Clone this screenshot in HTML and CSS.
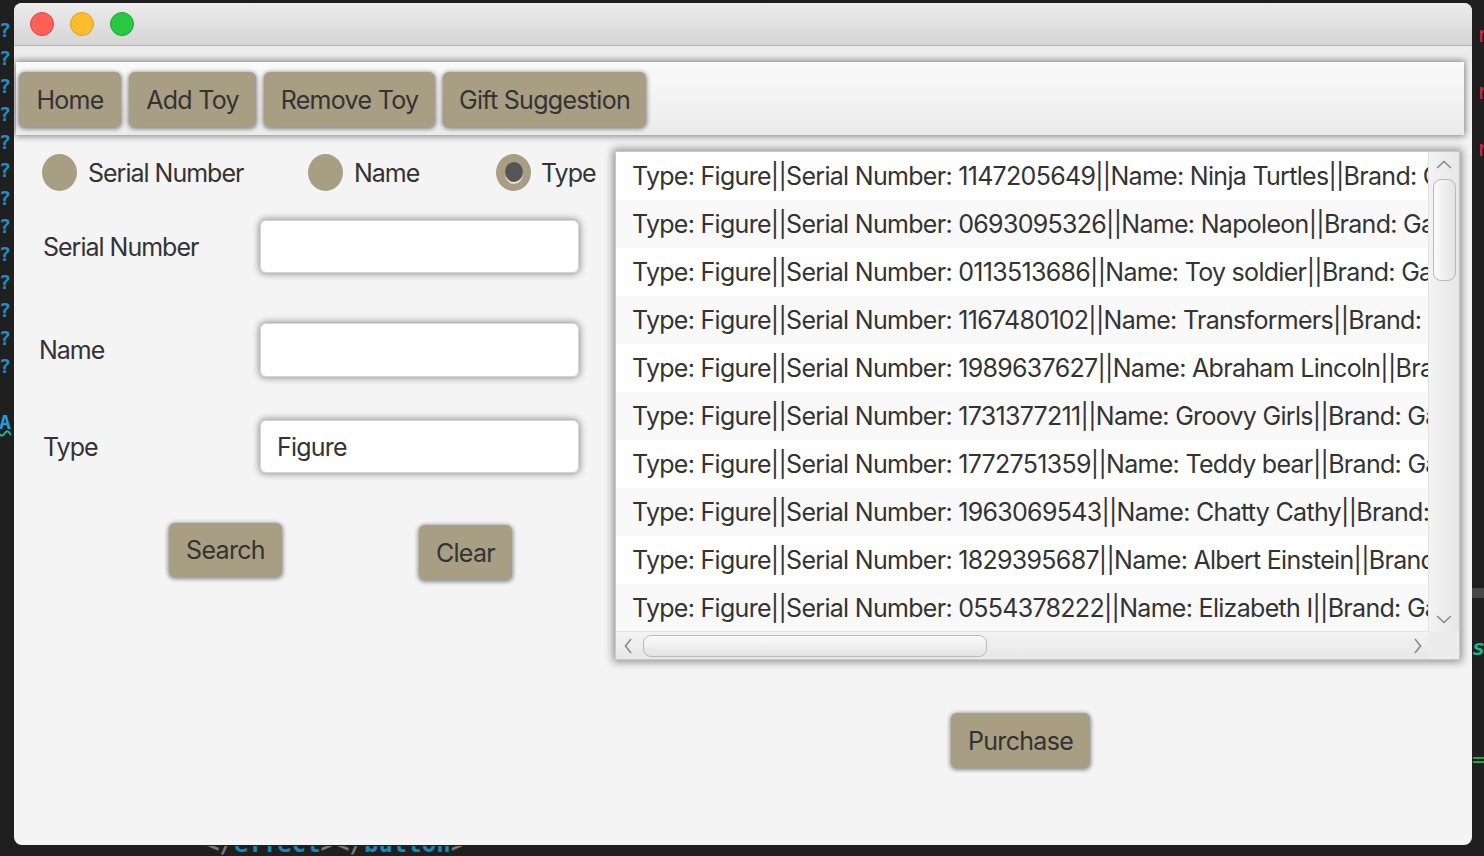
FILE: index.html
```html
<!DOCTYPE html>
<html lang="en">
<head>
<meta charset="utf-8">
<title>Toy Store</title>
<link rel="stylesheet" href="styles.css">
</head>
<body>
<div class="desk">
  <div class="gutter-left">
    <div class="q">?</div><div class="q">?</div><div class="q">?</div><div class="q">?</div><div class="q">?</div><div class="q">?</div><div class="q">?</div><div class="q">?</div><div class="q">?</div><div class="q">?</div><div class="q">?</div><div class="q">?</div><div class="q">?</div>
    <div class="a-mark">A</div>
  </div>
  <div class="window">
    <div class="titlebar">
      <span class="light red"></span>
      <span class="light yellow"></span>
      <span class="light green"></span>
    </div>
    <div class="strip"></div>
    <div class="toolbar">
      <button class="btn tb-home">Home</button>
      <button class="btn tb-add">Add Toy</button>
      <button class="btn tb-remove">Remove Toy</button>
      <button class="btn tb-gift">Gift Suggestion</button>
    </div>
    <div class="content">
      <div class="left">
        <div class="radios">
          <div class="radio r-serial"><span class="dot"></span><span>Serial Number</span></div>
          <div class="radio r-name"><span class="dot"></span><span>Name</span></div>
          <div class="radio r-type"><span class="dot on"><span class="pip"></span></span><span>Type</span></div>
        </div>
        <div class="frow frow-serial"><span class="flabel">Serial Number</span><div class="field"></div></div>
        <div class="frow frow-name"><span class="flabel flabel-name">Name</span><div class="field"></div></div>
        <div class="frow frow-type"><span class="flabel">Type</span><div class="field">Figure</div></div>
        <div class="actions">
          <button class="btn b-search">Search</button>
          <button class="btn b-clear">Clear</button>
        </div>
      </div>
      <div class="right">
        <div class="list">
          <div class="rows">
            <div class="row">Type: Figure||Serial Number: 1147205649||Name: Ninja Turtles||Brand: Games Workshop||Price: 24.99</div>
            <div class="row">Type: Figure||Serial Number: 0693095326||Name: Napoleon||Brand: Games Workshop||Price: 19.99</div>
            <div class="row">Type: Figure||Serial Number: 0113513686||Name: Toy soldier||Brand: Games Workshop||Price: 9.99</div>
            <div class="row">Type: Figure||Serial Number: 1167480102||Name: Transformers||Brand: Games Workshop||Price: 29.99</div>
            <div class="row">Type: Figure||Serial Number: 1989637627||Name: Abraham Lincoln||Brand: Games Workshop||Price: 14.99</div>
            <div class="row">Type: Figure||Serial Number: 1731377211||Name: Groovy Girls||Brand: Games Workshop||Price: 12.99</div>
            <div class="row">Type: Figure||Serial Number: 1772751359||Name: Teddy bear||Brand: Games Workshop||Price: 17.99</div>
            <div class="row">Type: Figure||Serial Number: 1963069543||Name: Chatty Cathy||Brand: Games Workshop||Price: 22.99</div>
            <div class="row">Type: Figure||Serial Number: 1829395687||Name: Albert Einstein||Brand: Games Workshop||Price: 15.99</div>
            <div class="row">Type: Figure||Serial Number: 0554378222||Name: Elizabeth I||Brand: Games Workshop||Price: 18.99</div>
          </div>
          <div class="vbar">
            <div class="arrow arrow-v"><svg width="16" height="9" viewBox="0 0 16 9"><path d="M1 8 L8 1.5 L15 8" fill="none" stroke="#8a8a8a" stroke-width="1.6"/></svg></div>
            <div class="vthumb"></div>
            <div class="spacer"></div>
            <div class="arrow arrow-v"><svg width="16" height="9" viewBox="0 0 16 9"><path d="M1 1 L8 7.5 L15 1" fill="none" stroke="#8a8a8a" stroke-width="1.6"/></svg></div>
          </div>
          <div class="hbar">
            <div class="arrow arrow-h-left"><svg width="8" height="16" viewBox="0 0 8 16"><path d="M7 1 L1.5 8 L7 15" fill="none" stroke="#8a8a8a" stroke-width="1.6"/></svg></div>
            <div class="hthumb"></div>
            <div class="spacer"></div>
            <div class="arrow arrow-h-right"><svg width="8" height="16" viewBox="0 0 8 16"><path d="M1 1 L6.5 8 L1 15" fill="none" stroke="#8a8a8a" stroke-width="1.6"/></svg></div>
          </div>
          <div class="corner"></div>
        </div>
        <button class="btn b-purchase">Purchase</button>
      </div>
    </div>
  </div>
  <div class="gutter-right">
    <div class="rr">r</div><div class="rr">r</div><div class="rr">r</div>
    <div class="gbar"></div>
    <div class="ss">s</div>
    <div class="eq">=</div>
  </div>
</div>
<div class="bottom-code"><span class="bc"><span class="punct">&lt;/</span><span class="tag">effect</span><span class="punct">&gt;&lt;/</span><span class="tag">button</span><span class="punct">&gt;</span></span></div>
</body>
</html>
```

FILE: styles.css
```css
* { box-sizing: border-box; }

html, body {
  margin: 0;
  padding: 0;
}

body {
  width: 1484px;
  height: 856px;
  overflow: hidden;
  background: #1f1f1f;
  font-family: "Inter", "Liberation Sans", sans-serif;
  color: #333333;
}

.desk {
  display: flex;
  height: 846px;
}

/* editor background peeking around the window */
.gutter-left {
  width: 14px;
  overflow: hidden;
  font-family: "DejaVu Sans Mono", monospace;
  font-weight: bold;
  font-size: 20px;
  color: #1f8ec4;
  padding-top: 16px;
}

.q {
  height: 28px;
  line-height: 28px;
  margin-left: -1px;
}

.a-mark {
  margin-top: 28px;
  margin-left: -1px;
  color: #1aa0dc;
  line-height: 28px;
  text-decoration: underline wavy #2ab39a;
}

.gutter-right {
  width: 12px;
  overflow: hidden;
  font-family: "DejaVu Sans Mono", monospace;
  font-size: 22px;
  padding-top: 20px;
}

.rr {
  color: #d4243f;
  height: 57px;
  line-height: 30px;
  margin-left: 4px;
}

.gbar {
  margin-top: 397px;
  height: 10px;
  background: #474747;
}

.ss {
  margin-top: 35px;
  height: 30px;
  color: #1bb398;
  font-style: italic;
  font-weight: bold;
  line-height: 30px;
}

.eq {
  margin-top: 82px;
  height: 30px;
  color: #2fae3a;
  line-height: 30px;
}

.bottom-code {
  height: 10px;
  overflow: hidden;
  padding-left: 205px;
  font-family: "DejaVu Sans Mono", monospace;
  font-weight: bold;
  font-size: 24px;
}

.bc {
  display: block;
  margin-top: -15px;
  line-height: 26px;
}

.punct { color: #7a7a7a; }
.tag { color: #1b84b8; }

/* window */
.window {
  width: 1458px;
  height: 842px;
  margin-top: 3px;
  background: #f4f4f4;
  border-radius: 8px;
  overflow: hidden;
  display: flex;
  flex-direction: column;
}

.titlebar {
  height: 43px;
  flex: none;
  display: flex;
  align-items: center;
  gap: 16px;
  padding-left: 16px;
  padding-bottom: 1px;
  background: linear-gradient(#ececec, #d5d5d5);
  border-bottom: 1px solid #b3b3b3;
}

.light {
  width: 24px;
  height: 24px;
  border-radius: 50%;
}

.red { background: #fe5f57; border: 1px solid #e2463f; }
.yellow { background: #febc2e; border: 1px solid #df9f22; }
.green { background: #28c840; border: 1px solid #1dad2b; }

.strip {
  height: 16px;
  flex: none;
  background: #ececec;
}

.toolbar {
  position: relative;
  z-index: 1;
  height: 73px;
  flex: none;
  margin: 0 8px 0 2px;
  padding: 10px 3px;
  display: flex;
  gap: 8px;
  background: linear-gradient(#fafafa, #ebebeb);
  box-shadow: 0 0 7px 1px rgba(0, 0, 0, 0.5);
}

.btn {
  font-family: "Inter", "Liberation Sans", sans-serif;
  font-size: 25px;
  letter-spacing: -0.7px;
  color: #333333;
  background: #a89e83;
  border: none;
  border-radius: 6px;
  box-shadow: 0 1px 4px 1px rgba(0, 0, 0, 0.45);
  padding: 0;
  height: 55px;
  display: flex;
  align-items: center;
  justify-content: center;
}

.tb-home { width: 102px; }
.tb-add { width: 127px; }
.tb-remove { width: 171px; }
.tb-gift { width: 203px; }

.content {
  flex: 1;
  display: flex;
}

/* left search pane */
.left {
  width: 601px;
  padding-top: 19px;
  display: flex;
  flex-direction: column;
}

.radios {
  display: flex;
  height: 37px;
  padding-left: 28px;
}

.radio {
  display: flex;
  align-items: center;
  gap: 11px;
  font-size: 25px;
  letter-spacing: -1px;
}

.r-serial { width: 266px; }
.r-name { width: 188px; }
.r-type { gap: 10px; }

.dot {
  width: 35px;
  height: 37px;
  border-radius: 50%;
  background: #a89e83;
  display: flex;
  align-items: center;
  justify-content: center;
}

.pip {
  width: 18px;
  height: 20px;
  border-radius: 50%;
  background: #555555;
  box-shadow: 0 2px 0 #e9e5da;
  margin-top: -2px;
}

.frow {
  display: flex;
  align-items: center;
  height: 51px;
  padding-left: 29px;
}

.frow-serial { margin-top: 30px; }
.frow-name { margin-top: 52px; height: 52px; }
.frow-type { margin-top: 45px; }

.flabel {
  width: 218px;
  font-size: 25px;
  letter-spacing: -1px;
}

.flabel-name { margin-left: -4px; width: 222px; }

.field {
  width: 317px;
  height: 100%;
  background: #ffffff;
  border-radius: 5px;
  box-shadow: 0 0 0 1px #d6d6d6, 0 0 7px 2px rgba(0, 0, 0, 0.42);
  font-size: 25px;
  letter-spacing: -0.8px;
  padding-left: 16px;
  display: flex;
  align-items: center;
}

.actions {
  display: flex;
  align-items: flex-start;
  margin-top: 51px;
  padding-left: 155px;
}

.b-search { width: 113px; height: 54px; }
.b-clear { width: 93px; height: 55px; margin-left: 137px; margin-top: 2px; }

/* right results pane */
.right {
  padding-top: 16px;
  display: flex;
  flex-direction: column;
}

.list {
  width: 845px;
  height: 509px;
  background: #ffffff;
  border: 1px solid #c9c9c9;
  box-shadow: 0 0 8px 2px rgba(0, 0, 0, 0.42);
  display: grid;
  grid-template-columns: 1fr 31px;
  grid-template-rows: 1fr 28px;
}

.rows {
  overflow: hidden;
}

.row {
  height: 48px;
  line-height: 48px;
  padding-left: 16px;
  white-space: nowrap;
  font-size: 25px;
  letter-spacing: -0.7px;
  background: #ffffff;
}

.row:nth-child(even) { background: #f9f9f9; }

.vbar {
  display: flex;
  flex-direction: column;
  align-items: center;
  background: linear-gradient(to right, #f3f3f3, #e7e7e7);
  border-left: 1px solid #e2e2e2;
}

.arrow {
  display: flex;
  align-items: center;
  justify-content: center;
  flex: none;
}

.arrow-v { height: 24px; width: 100%; }

.vthumb {
  width: 23px;
  height: 102px;
  margin-top: 3px;
  border-radius: 8px;
  border: 1px solid #b9b9b9;
  background: linear-gradient(to right, #fbfbfb, #e3e3e3);
}

.spacer { flex: 1; }

.hbar {
  display: flex;
  align-items: center;
  background: linear-gradient(#f3f3f3, #e7e7e7);
  border-top: 1px solid #e2e2e2;
}

.arrow-h-left { width: 24px; height: 100%; }
.arrow-h-right { width: 20px; height: 100%; }

.hthumb {
  width: 344px;
  height: 22px;
  margin-left: 3px;
  border-radius: 8px;
  border: 1px solid #b9b9b9;
  background: linear-gradient(#fbfbfb, #e3e3e3);
}

.corner {
  background: #ececec;
}

.b-purchase {
  width: 139px;
  height: 55px;
  margin-top: 53px;
  margin-left: 336px;
}
```
